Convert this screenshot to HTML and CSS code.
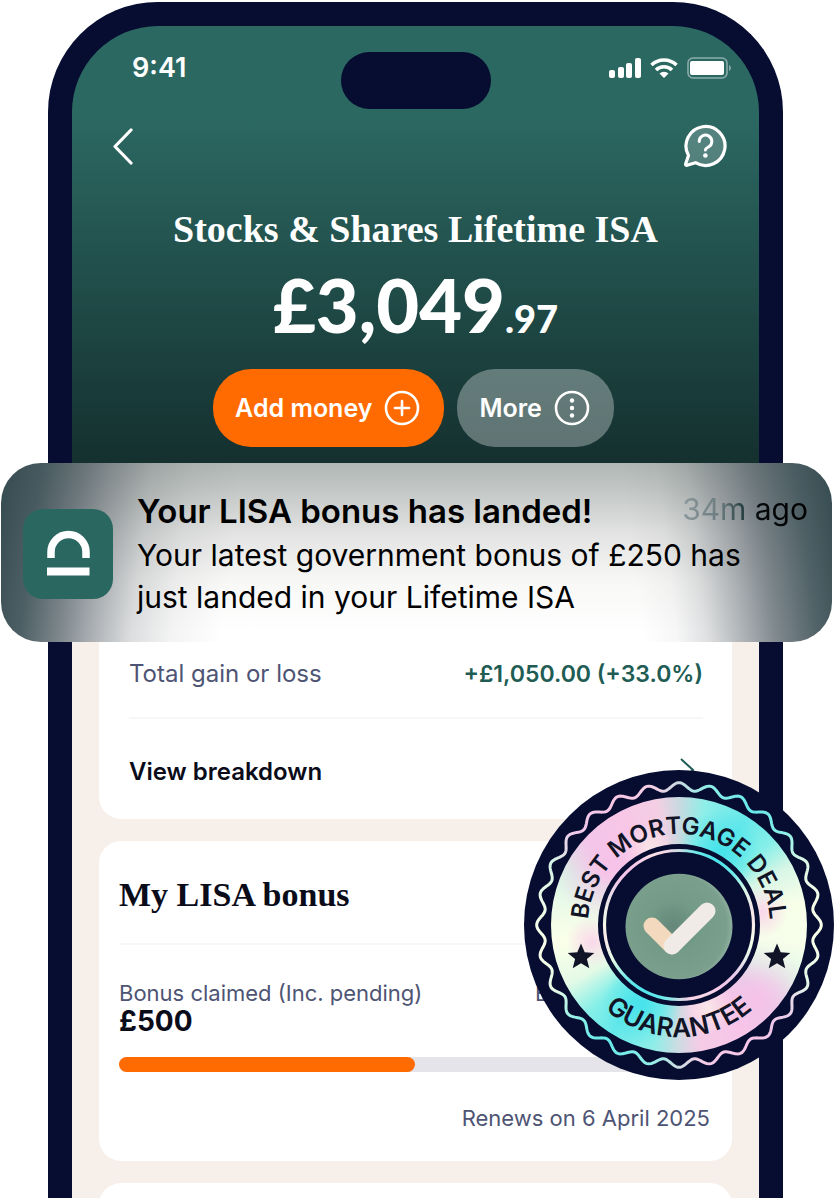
FILE: index.html
```html
<!DOCTYPE html>
<html lang="en">
<head>
    <meta charset="UTF-8">
    <meta name="viewport" content="width=device-width, initial-scale=1">
    <title>Lifetime ISA</title>
    <link rel="stylesheet" href="styles.css">
</head>
<body>
<div class="stage">
    <div class="phone">
        <header class="hero">
            <div class="status">
                <span class="time">9:41</span>
                <span class="island"></span>
                <div class="signals">
                    <svg width="122" height="22" viewBox="0 0 122 22" aria-hidden="true">
                        <g fill="#fff">
                            <rect x="0" y="13" width="6" height="8" rx="2"/>
                            <rect x="9" y="10" width="6" height="11" rx="2"/>
                            <rect x="17" y="6" width="6" height="15" rx="2"/>
                            <rect x="26" y="1" width="6" height="20" rx="2"/>
                            <path d="M55 21l-4.500-4.500a6.500 6.500 0 0 1 9 0z"/>
                            <rect x="81" y="4" width="34" height="14" rx="2"/>
                        </g>
                        <path d="M42.500 8a18 18 0 0 1 25 0M47 13a11.500 11.500 0 0 1 16 0" fill="none" stroke="#fff" stroke-width="3.600"/>
                        <rect x="79" y="1" width="39" height="20" rx="5" fill="none" stroke="#fff" stroke-opacity=".45" stroke-width="1.600"/>
                        <path d="M120 8q2 1 2 3t-2 3z" fill="#fff" fill-opacity=".45"/>
                    </svg>
                </div>
            </div>
            <nav class="topnav">
                <button class="icon-btn" aria-label="Back">
                    <svg width="22" height="38" viewBox="0 0 22 38"><path d="M19 3L3 19.500 19 36" fill="none" stroke="#fff" stroke-width="3.200" stroke-linecap="round" stroke-linejoin="round"/></svg>
                </button>
                <button class="icon-btn" aria-label="Help">
                    <svg width="44" height="44" viewBox="0 0 44 44">
                        <path d="M5.500 31.500A19.500 19.500 0 1 1 12.500 38.700L4 41.300Q2.500 41.500 2.600 40z" fill="#fff" fill-opacity=".2" stroke="#fff" stroke-width="3.200" stroke-linejoin="round"/>
                        <path d="M16.200 17.500a6.300 6.300 0 1 1 9.600 5.300c-2.200 1.300-3.400 2-3.400 3.200" fill="none" stroke="#fff" stroke-width="3" stroke-linecap="round"/>
                        <circle cx="22.400" cy="31.500" r="2.300" fill="#fff"/>
                    </svg>
                </button>
            </nav>
            <h1 class="account">Stocks &amp; Shares Lifetime ISA</h1>
            <p class="balance">£3,049<span class="pence">.97</span></p>
            <div class="actions">
                <button class="pill pill-add">Add money
                    <svg width="36" height="36" viewBox="0 0 36 36"><g fill="none" stroke="#fff" stroke-width="2.600" stroke-linecap="round"><circle cx="18" cy="18" r="16"/><path d="M18 11v14M11 18h14"/></g></svg>
                </button>
                <button class="pill pill-more">More
                    <svg width="36" height="36" viewBox="0 0 36 36"><circle cx="18" cy="18" r="16" fill="none" stroke="#fff" stroke-width="2.600"/><g fill="#fff"><circle cx="18" cy="10.500" r="2.200"/><circle cx="18" cy="18" r="2.200"/><circle cx="18" cy="25.500" r="2.200"/></g></svg>
                </button>
            </div>
        </header>

        <main class="cards">
            <section class="card card-gain">
                <div class="row row-gain">
                    <span class="muted">Total gain or loss</span>
                    <strong class="gain">+£1,050.00 (+33.0%)</strong>
                </div>
                <a class="row row-link" href="#">View breakdown
                    <svg width="14" height="26" viewBox="0 0 14 26"><path d="M1 1l12 11L1 23" fill="none" stroke="#1f5c54" stroke-width="2"/></svg>
                </a>
            </section>
            <section class="card card-bonus">
                <h2 class="card-title">My LISA bonus</h2>
                <div class="claim">
                    <div>
                        <p class="muted small">Bonus claimed (Inc. pending)</p>
                        <p class="claimed">£500</p>
                    </div>
                    <p class="muted small claim-right">E</p>
                </div>
                <div class="track"><div class="fill"></div></div>
                <p class="muted small renews">Renews on 6 April 2025</p>
            </section>
            <section class="card card-next"></section>
        </main>
    </div>

    <!-- push notification over the phone -->
    <aside class="notice">
        <svg class="app-icon" width="90" height="90" viewBox="0 0 90 90" aria-hidden="true">
            <rect width="90" height="90" rx="20" fill="#2b6761"/>
            <path d="M28 49v-6a17.500 17.500 0 0 1 35 0v6" fill="none" stroke="#fff" stroke-width="7.500"/>
            <path d="M24 62.500h42.500" stroke="#fff" stroke-width="8"/>
        </svg>
        <div class="notice-body">
            <div class="notice-head">
                <strong class="notice-title">Your LISA bonus has landed!</strong>
                <span class="ago">34m ago</span>
            </div>
            <p class="notice-text">Your latest government bonus of £250 has just landed in your Lifetime ISA</p>
        </div>
    </aside>

    <!-- guarantee seal -->
    <svg class="seal" width="310" height="310" viewBox="0 0 310 310">
        <defs>
            <mask id="holoMask" maskUnits="userSpaceOnUse" x="0" y="0" width="310" height="310">
                <path id="wave" fill="none" stroke="#fff" stroke-width="3"/>
                <circle cx="155" cy="155" r="104.500" fill="none" stroke="#fff" stroke-width="47"/>
                <circle cx="155" cy="155" r="74.500" fill="none" stroke="#fff" stroke-width="3.200"/>
            </mask>
            <radialGradient id="disc" cx=".45" cy=".5" r=".62">
                <stop offset="0" stop-color="#648779"/>
                <stop offset=".4" stop-color="#749a88"/>
                <stop offset=".8" stop-color="#7b9f8d"/>
                <stop offset="1" stop-color="#a5c3b3"/>
            </radialGradient>
            <path id="arcTop" d="M64 155a91 91 0 0 1 182 0"/>
            <path id="arcBottom" d="M43 155a112 112 0 0 0 224 0"/>
        </defs>
        <circle cx="155" cy="155" r="155" fill="#060d31"/>
        <g mask="url(#holoMask)">
            <foreignObject width="310" height="310"><div class="holo"></div></foreignObject>
        </g>
        <ellipse cx="155" cy="156.500" rx="53.500" ry="52.700" fill="url(#disc)"/>
        <path d="M128 156l20 20" stroke="#f3d9bd" stroke-width="17" stroke-linecap="round"/>
        <path d="M148 176l35-35" stroke="#f0ebe6" stroke-width="17" stroke-linecap="round"/>
        <g fill="#111426">
            <path id="star" d="M57 173.500l3.700 8.700 9.600.7-7.400 6.100 2.400 9.300-8.300-5.100-8.300 5.100 2.400-9.300-7.400-6.100 9.600-.7z"/>
            <use href="#star" x="196"/>
        </g>
        <text class="seal-text"><textPath href="#arcTop" startOffset="50%">BEST MORTGAGE DEAL</textPath></text>
        <text class="seal-text seal-text-bottom"><textPath href="#arcBottom" startOffset="50%">GUARANTEE</textPath></text>
    </svg>
</div>
<script src="seal.js"></script>
</body>
</html>
```
FILE: styles.css
```css
*{
    margin: 0;
    padding: 0;
    box-sizing: border-box;
}
body{
    background: #fff;
    color: #0b0c1a;
    font-family: Inter, "Liberation Sans", sans-serif;
}
button{
    border: 0;
    background: none;
    color: inherit;
    font: inherit;
    cursor: pointer;
}
svg{
    display: block;
    flex: none;
}
.stage{
    position: relative;
    height: 100vh;
    overflow: hidden;
    padding: 2px 51px 0 48px;
}

/* phone */
.phone{
    display: flex;
    flex-direction: column;
    min-height: 100%;
    border: 24px solid #060d31;
    border-bottom: 0;
    border-radius: 110px 110px 0 0;
    overflow: hidden;
    background: #060d31;
}
.hero{
    padding: 26px 28px 102px;
    background: linear-gradient(#2c6862 0, #2c6862 90px, #14302f 436px);
    color: #fff;
    text-align: center;
}
.status{
    display: grid;
    grid-template-columns: 1fr auto 1fr;
}
.time{
    padding-left: 32px;
    text-align: left;
    font-size: 27px;
    font-weight: 600;
    line-height: 32px;
}
.island{
    width: 150px;
    height: 57px;
    border-radius: 29px;
    background: #060d31;
}
.signals{
    display: flex;
    justify-content: flex-end;
    align-items: center;
    height: 32px;
}
.topnav{
    display: flex;
    justify-content: space-between;
    align-items: center;
    height: 46px;
    margin-top: 14px;
    padding: 0 4px 0 12px;
}
.account{
    margin-top: 38px;
    font-family: "Liberation Serif", serif;
    font-size: 38px;
    font-weight: 700;
    line-height: 44px;
}
.balance{
    margin-top: 12px;
    font-family: Lato, Inter, sans-serif;
    font-size: 74px;
    font-weight: 900;
    line-height: 84px;
}
.pence{
    font-size: 38px;
    line-height: 40px;
}
.actions{
    display: flex;
    justify-content: center;
    gap: 13px;
    margin-top: 22px;
    padding-right: 4px;
}
.pill{
    display: flex;
    align-items: center;
    gap: 12px;
    height: 78px;
    padding: 0 24px 0 22px;
    border-radius: 38px;
    font-size: 25px;
    font-weight: 600;
}
.pill-add{
    background: #ff6b00;
}
.pill-more{
    background: rgba(255, 255, 255, .32);
}

/* cards */
.cards{
    flex: 1;
    display: flex;
    flex-direction: column;
    gap: 22px;
    padding: 22px 27px 0;
    background: #f7efe9;
}
.card{
    border-radius: 22px;
    background: #fff;
}
.card-gain{
    padding: 60px 29px 0 30px;
}
.row{
    display: flex;
    justify-content: space-between;
    align-items: center;
}
.row-gain{
    height: 88px;
    border-bottom: 2px solid #f7f7f9;
}
.row-link{
    height: 100px;
    padding: 4px 9px 0 0;
    color: #0b0c1a;
    font-size: 24px;
    font-weight: 600;
    text-decoration: none;
}
.muted{
    color: #4e5474;
    font-size: 24px;
    line-height: 28px;
}
.small{
    font-size: 22px;
}
.gain{
    color: #205c54;
    font-size: 23px;
    font-weight: 600;
}
.card-bonus{
    height: 320px;
    padding: 30px 22px 0 20px;
}
.card-title{
    height: 74px;
    border-bottom: 2px solid #f7f7f9;
    font-family: "Liberation Serif", serif;
    font-size: 34px;
    font-weight: 700;
    line-height: 48px;
}
.claim{
    display: flex;
    justify-content: space-between;
    padding-top: 34px;
}
.claim-right{
    width: 175px;
}
.claimed{
    font-size: 28px;
    font-weight: 700;
    line-height: 28px;
}
.track{
    height: 15px;
    margin-top: 22px;
    border-radius: 8px;
    background: #e5e4ea;
}
.fill{
    width: 50%;
    height: 100%;
    border-radius: 8px;
    background: #ff6b00;
}
.renews{
    margin-top: 32px;
    text-align: right;
}
.card-next{
    height: 120px;
}

/* notification */
.notice{
    position: absolute;
    top: 463px;
    left: 1px;
    right: 2px;
    display: flex;
    align-items: center;
    gap: 24px;
    padding: 25px 24px 22px 22px;
    border-radius: 40px;
    color: #000;
    background:
        linear-gradient(97deg, rgba(54, 76, 80, 1) 0, rgba(58, 78, 84, .9) 40px, rgba(66, 80, 88, .68) 80px, rgba(74, 84, 92, .46) 112px, rgba(80, 88, 94, .2) 150px, rgba(90, 94, 98, .07) 190px, rgba(90, 94, 98, 0) 240px),
        linear-gradient(263deg, rgba(54, 76, 80, 1) 0, rgba(58, 78, 84, .88) 36px, rgba(66, 80, 88, .68) 76px, rgba(74, 84, 92, .44) 110px, rgba(80, 88, 94, .18) 146px, rgba(90, 94, 98, .05) 175px, rgba(90, 94, 98, 0) 210px),
        linear-gradient(#b0b7b4 0, #c5c9c7 30px, #e2e3e2 70px, #f8f8f7 120px, #fff 170px);
}
.notice-body{
    flex: 1;
}
.notice-head{
    display: flex;
    justify-content: space-between;
    align-items: flex-start;
}
.notice-title{
    font-size: 33px;
    font-weight: 600;
    line-height: 46px;
}
.ago{
    font-size: 30px;
    line-height: 42px;
    color: transparent;
    background: linear-gradient(90deg, #8b979c 0, #6c7c80 30%, #1f3a3b 50%, #05080a 62%, #000);
    -webkit-background-clip: text;
    background-clip: text;
}
.notice-text{
    max-width: 640px;
    padding-bottom: 2px;
    font-size: 30px;
    line-height: 42px;
}

/* seal */
.seal{
    position: absolute;
    top: 770px;
    right: 0;
}
.holo{
    width: 310px;
    height: 310px;
    background:
        radial-gradient(circle at 82px 100px, rgba(249, 193, 232, .95) 0, rgba(249, 193, 232, 0) 52px),
        radial-gradient(circle at 235px 228px, rgba(249, 193, 232, .95) 0, rgba(249, 193, 232, 0) 52px),
        radial-gradient(circle at 238px 142px, rgba(249, 205, 234, .8) 0, rgba(249, 205, 234, 0) 26px),
        radial-gradient(circle at 68px 172px, rgba(249, 205, 234, .8) 0, rgba(249, 205, 234, 0) 26px),
        radial-gradient(circle at 125px 80px, rgba(250, 240, 232, .8) 0, rgba(250, 240, 232, 0) 26px),
        radial-gradient(circle at 185px 238px, rgba(250, 240, 232, .8) 0, rgba(250, 240, 232, 0) 26px),
        radial-gradient(circle at 196px 80px, rgba(66, 226, 236, .9) 0, rgba(66, 226, 236, 0) 40px),
        radial-gradient(circle at 118px 235px, rgba(66, 226, 236, .9) 0, rgba(66, 226, 236, 0) 40px),
        conic-gradient(#c9d9e0 0, #8feee8 12deg, #66e8ea 32deg, #86efe8 48deg, #d8f6e6 62deg, #f8ffe9 80deg, #f6fdea 100deg, #dff8e8 116deg, #dfcfea 132deg, #f6c6e8 148deg, #f5cbe6 170deg, #cfdbe2 180deg, #8feee8 192deg, #66e8ea 212deg, #86efe8 226deg, #e4fae6 242deg, #fbffe9 262deg, #e8fae8 282deg, #d5f5e6 296deg, #efc8ea 312deg, #f8c6e6 332deg, #f3cfe4 350deg, #c9d9e0 360deg);
}
.seal-text{
    fill: #111426;
    font-size: 24px;
    font-weight: 600;
    text-anchor: middle;
}
.seal-text-bottom{
    font-size: 26px;
}
```
FILE: seal.js
```js
// wavy outline of the seal: 28 bumps round the centre
var points = [];
for (var a = 0; a < 720; a++) {
    var t = a * Math.PI / 360;
    var r = 138.5 + 3.8 * Math.cos(28 * t);
    points.push((155 + r * Math.sin(t)).toFixed(2) + " " + (155 - r * Math.cos(t)).toFixed(2));
}
document.getElementById("wave").setAttribute("d", "M" + points.join("L") + "Z");
```
